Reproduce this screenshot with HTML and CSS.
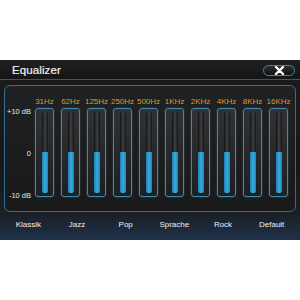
FILE: index.html
```html
<!DOCTYPE html>
<html lang="en">
<head>
    <meta charset="UTF-8">
    <title>Equalizer</title>
    <link rel="stylesheet" href="styles.css">
</head>
<body>
    <div id="eq">
        <div id="head">
            <span id="title">Equalizer</span>
            <div id="close">
                <svg width="11" height="9" viewBox="0 0 11 9"><path d="M2 1 L9 8 M9 1 L2 8" stroke="#ffffff" stroke-width="2.4" stroke-linecap="round"/></svg>
            </div>
        </div>
        <div id="panel">
            <div class="freqs">
                <span>31Hz</span><span>62Hz</span><span>125Hz</span><span>250Hz</span><span>500Hz</span>
                <span>1KHz</span><span>2KHz</span><span>4KHz</span><span>8KHz</span><span>16KHz</span>
            </div>
            <div class="main">
                <div class="scale">
                    <span>+10 dB</span>
                    <span>0</span>
                    <span>-10 dB</span>
                </div>
                <div class="sliders">
                    <div class="slider"><div class="track"><div class="fill"></div></div></div>
                    <div class="slider"><div class="track"><div class="fill"></div></div></div>
                    <div class="slider"><div class="track"><div class="fill"></div></div></div>
                    <div class="slider"><div class="track"><div class="fill"></div></div></div>
                    <div class="slider"><div class="track"><div class="fill"></div></div></div>
                    <div class="slider"><div class="track"><div class="fill"></div></div></div>
                    <div class="slider"><div class="track"><div class="fill"></div></div></div>
                    <div class="slider"><div class="track"><div class="fill"></div></div></div>
                    <div class="slider"><div class="track"><div class="fill"></div></div></div>
                    <div class="slider"><div class="track"><div class="fill"></div></div></div>
                </div>
            </div>
        </div>
        <div id="presets">
            <span>Klassik</span><span>Jazz</span><span>Pop</span><span>Sprache</span><span>Rock</span><span>Default</span>
        </div>
    </div>
</body>
</html>
```
FILE: styles.css
```css
body
{
    margin: 0;
    background: #ffffff;
    font-family: 'Liberation Sans', Arial, sans-serif;
}
#eq
{
    margin-top: 60px;
    width: 300px;
    height: 180px;
    background: linear-gradient(to bottom, #1b1b1c 0%, #181818 60%, #1a1f26 85%, #1f3149 100%);
    display: flex;
    flex-direction: column;
}
#head
{
    height: 19px;
    border-bottom: 1px solid #2c5d78;
    background: linear-gradient(to bottom, #202022, #151515);
    display: flex;
    align-items: center;
    justify-content: space-between;
    padding: 0 5px 0 12px;
}
#title
{
    color: #f2f2f2;
    font-size: 11.5px;
    letter-spacing: 0.1px;
    -webkit-text-stroke: 0.2px #f2f2f2;
}
#close
{
    width: 30px;
    height: 9px;
    border: 1.5px solid #3f86ad;
    border-radius: 7px;
    background: linear-gradient(to bottom, #2a2d31, #111214);
    display: flex;
    align-items: center;
    justify-content: center;
    margin-top: 2px;
}
#panel
{
    margin: 5px 4px 0 4px;
    height: 125px;
    border: 1px solid #2e6f92;
    border-radius: 6px;
    background: linear-gradient(to bottom, #202122, #19191a);
}
.freqs
{
    display: flex;
    gap: 7px;
    padding: 11px 0 0 30px;
    height: 11px;
}
.freqs span
{
    width: 19px;
    display: flex;
    justify-content: center;
    white-space: nowrap;
    color: #d99a34;
    font-size: 8px;
}
.main
{
    display: flex;
}
.scale
{
    width: 26px;
    display: flex;
    flex-direction: column;
    justify-content: space-between;
    align-items: flex-end;
    color: #e6e6e6;
    font-size: 7.5px;
    height: 93px;
    margin-top: -1px;
}
.sliders
{
    display: flex;
    gap: 7px;
    margin-left: 4px;
}
.slider
{
    width: 17px;
    height: 87px;
    border: 1px solid #4289b0;
    border-radius: 3px;
    background: linear-gradient(to bottom, #303235, #1e1f21);
    box-shadow: 0 0 2px rgba(70, 150, 200, 0.45);
    display: flex;
    justify-content: center;
    align-items: center;
}
.track
{
    width: 6px;
    height: 81px;
    border-radius: 2px;
    background: linear-gradient(to right, #111111, #404042 50%, #141414);
    display: flex;
    flex-direction: column;
    justify-content: flex-end;
}
.fill
{
    height: 41px;
    border-radius: 0 0 2px 2px;
    background: linear-gradient(to right, #1f7fb0, #37a9df 50%, #2186ba);
}
#presets
{
    display: grid;
    grid-template-columns: repeat(6, 1fr);
    padding: 0 4px;
    margin-top: 8px;
    color: #f0f0f0;
    font-size: 8px;
    text-align: center;
}
```
